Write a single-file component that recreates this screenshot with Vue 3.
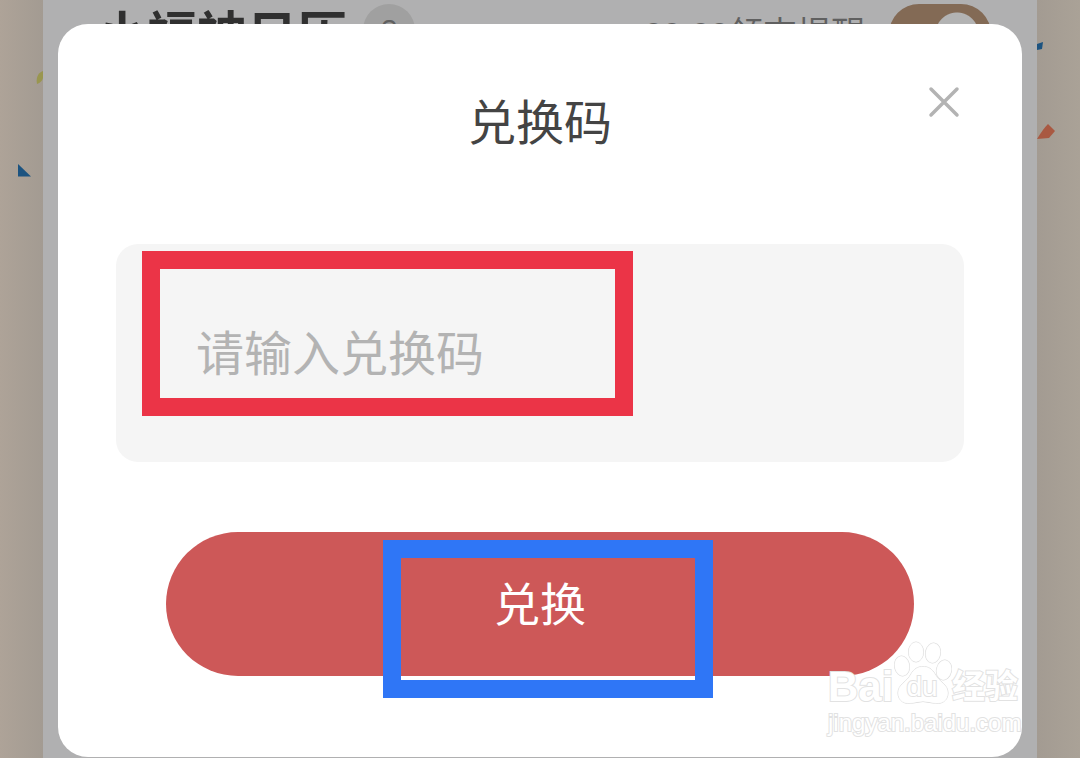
<script setup>
import { ref } from 'vue'

const code = ref('')
const remind = ref(true)
const open = ref(true)
</script>

<template>
  <div class="page">
    <svg class="confetti left" viewBox="0 0 43 200" aria-hidden="true">
      <path d="M43 71C37 73 36 79 37 84Q42 82 43 78Z" fill="#99964f" />
      <path d="M18 164L31 176.500H18Z" fill="#1c5380" />
    </svg>
    <svg class="confetti right" viewBox="0 0 43 200" aria-hidden="true">
      <path d="M0 44L6 42L5 49L0 50Z" fill="#1c5380" />
      <path d="M0 139Q6 129 11 124L18 131L12 138Z" fill="#a95942" />
    </svg>
    <main class="calendar">
      <header class="calendar-head">
        <h1>小福神日历</h1>
        <button class="help" type="button" aria-label="帮助">?</button>
        <label class="remind">
          <span>09:00领吉提醒</span>
          <input v-model="remind" type="checkbox" role="switch" />
        </label>
      </header>
    </main>

    <div v-if="open" class="overlay">
      <form class="dialog" role="dialog" aria-labelledby="dialog-title" @submit.prevent>
        <h2 id="dialog-title">兑换码</h2>
        <button class="close" type="button" aria-label="关闭" @click="open = false">
          <svg viewBox="0 0 32 32" aria-hidden="true">
            <path d="M3 3L29 29M29 3L3 29" />
          </svg>
        </button>
        <div class="field">
          <input v-model="code" type="text" placeholder="请输入兑换码" aria-label="兑换码" />
          <span class="mark red"></span>
        </div>
        <div class="action">
          <button class="submit" type="submit">兑换</button>
          <span class="mark blue"></span>
        </div>
        <div class="watermark">
          <div class="brand">
            <span class="bai">Bai</span>
            <span class="paw">
              <svg viewBox="0 0 60 66" aria-hidden="true">
                <ellipse cx="10" cy="27" rx="7.500" ry="10" transform="rotate(-10 10 27)" />
                <ellipse cx="24" cy="13" rx="7.500" ry="10" />
                <ellipse cx="41" cy="14" rx="7.500" ry="10" transform="rotate(10 41 14)" />
                <ellipse cx="52" cy="31" rx="7.500" ry="10" transform="rotate(12 52 31)" />
                <path d="M19 35C24 25 38 25 43 35C47 43 56 45 56 54C56 62 49 66 41 64Q31 61 21 64C13 66 6 62 6 54C6 45 15 43 19 35Z" />
              </svg>
              <span class="du">du</span>
            </span>
            <span class="jy">经验</span>
          </div>
          <div class="site">jingyan.baidu.com</div>
        </div>
      </form>
    </div>
  </div>
</template>

<style>
body {
  margin: 0;
}
</style>

<style scoped>
* {
  box-sizing: border-box;
}
.page {
  position: relative;
  min-height: 100vh;
  padding: 0 43px;
  display: flex;
  overflow: hidden;
  background: linear-gradient(90deg, #aea398 0, #a39b92 43px, #a39b92 calc(100% - 43px), #aaa297 100%);
  font-family: "Liberation Sans", "Noto Sans CJK SC", sans-serif;
}
.confetti {
  position: absolute;
  top: 0;
  width: 43px;
  height: 200px;
}
.left {
  left: 0;
}
.right {
  right: 0;
}
.calendar {
  flex: 1;
  background: #b0b0b1;
}
.calendar-head {
  display: flex;
  align-items: flex-start;
  padding: 4px 46px 0 54px;
}
h1 {
  margin: 0;
  font-size: 50px;
  line-height: 64px;
  font-weight: 700;
  color: #303030;
}
.help {
  width: 52px;
  height: 52px;
  margin-left: 16px;
  padding: 0;
  border: 0;
  border-radius: 50%;
  background: #a0a0a0;
  color: #606060;
  font: 28px/52px "Liberation Sans", sans-serif;
}
.remind {
  display: flex;
  align-items: flex-start;
  gap: 24px;
  margin-left: auto;
  color: #606060;
  font-size: 34px;
  line-height: 60px;
}
.remind input {
  appearance: none;
  width: 102px;
  height: 60px;
  margin: 0;
  border-radius: 30px;
  background: radial-gradient(circle at 68px 30px, #b3b3b3 21px, #836a55 22px);
}
.overlay {
  position: absolute;
  inset: 0;
  padding: 24px 58px 1px;
  display: flex;
}
.dialog {
  position: relative;
  flex: 1;
  padding: 70px 58px 0;
  border-radius: 30px;
  background: #fff;
}
h2 {
  margin: 0 0 90px;
  font-size: 48px;
  line-height: 60px;
  font-weight: 400;
  text-align: center;
  color: #444;
}
.close {
  position: absolute;
  top: 62px;
  right: 62px;
  width: 32px;
  height: 32px;
  padding: 0;
  border: 0;
  background: none;
}
.close svg {
  display: block;
}
.close path {
  fill: none;
  stroke: #b3b3b3;
  stroke-width: 3.5;
  stroke-linecap: round;
}
.field {
  position: relative;
}
.field input {
  display: block;
  width: 100%;
  height: 218px;
  padding: 2px 80px 0;
  border: 0;
  border-radius: 22px;
  background: #f5f5f5;
  color: #444;
  font: 48px "Liberation Sans", "Noto Sans CJK SC", sans-serif;
}
.field input::placeholder {
  color: #b3b3b3;
  opacity: 1;
}
.mark {
  position: absolute;
  pointer-events: none;
}
.red {
  left: 26px;
  top: 7px;
  width: 491px;
  height: 165px;
  border: 18px solid #eb3447;
}
.action {
  position: relative;
  margin: 70px 50px 0;
}
.submit {
  display: block;
  width: 100%;
  height: 144px;
  border: 0;
  padding: 0 0 6px;
  border-radius: 72px;
  background: #cd5858;
  color: #fff;
  font: 46px "Liberation Sans", "Noto Sans CJK SC", sans-serif;
}
.blue {
  left: 217px;
  top: 8px;
  width: 330px;
  height: 158px;
  border: 18px solid #2f76f6;
}
.watermark {
  position: absolute;
  right: 0;
  bottom: 20px;
  width: 194px;
  font-family: "Liberation Sans", "Noto Sans CJK SC", sans-serif;
  color: #fff;
  -webkit-text-stroke: 2px #e2e2e2;
  paint-order: stroke fill;
}
.brand {
  display: flex;
  align-items: flex-end;
  height: 64px;
  line-height: 36px;
}
.bai {
  width: 64px;
  font-size: 42px;
  font-weight: 700;
}
.paw {
  position: relative;
  width: 60px;
  height: 66px;
}
.paw svg {
  display: block;
  fill: rgba(255, 255, 255, 0.8);
  stroke: #dadada;
}
.du {
  position: absolute;
  inset: 30px 0 0;
  font-size: 28px;
  line-height: 36px;
  text-align: center;
}
.jy {
  font-size: 33px;
  font-weight: 700;
  white-space: nowrap;
}
.site {
  padding-top: 4px;
  font-size: 24px;
  line-height: 28px;
}
</style>
